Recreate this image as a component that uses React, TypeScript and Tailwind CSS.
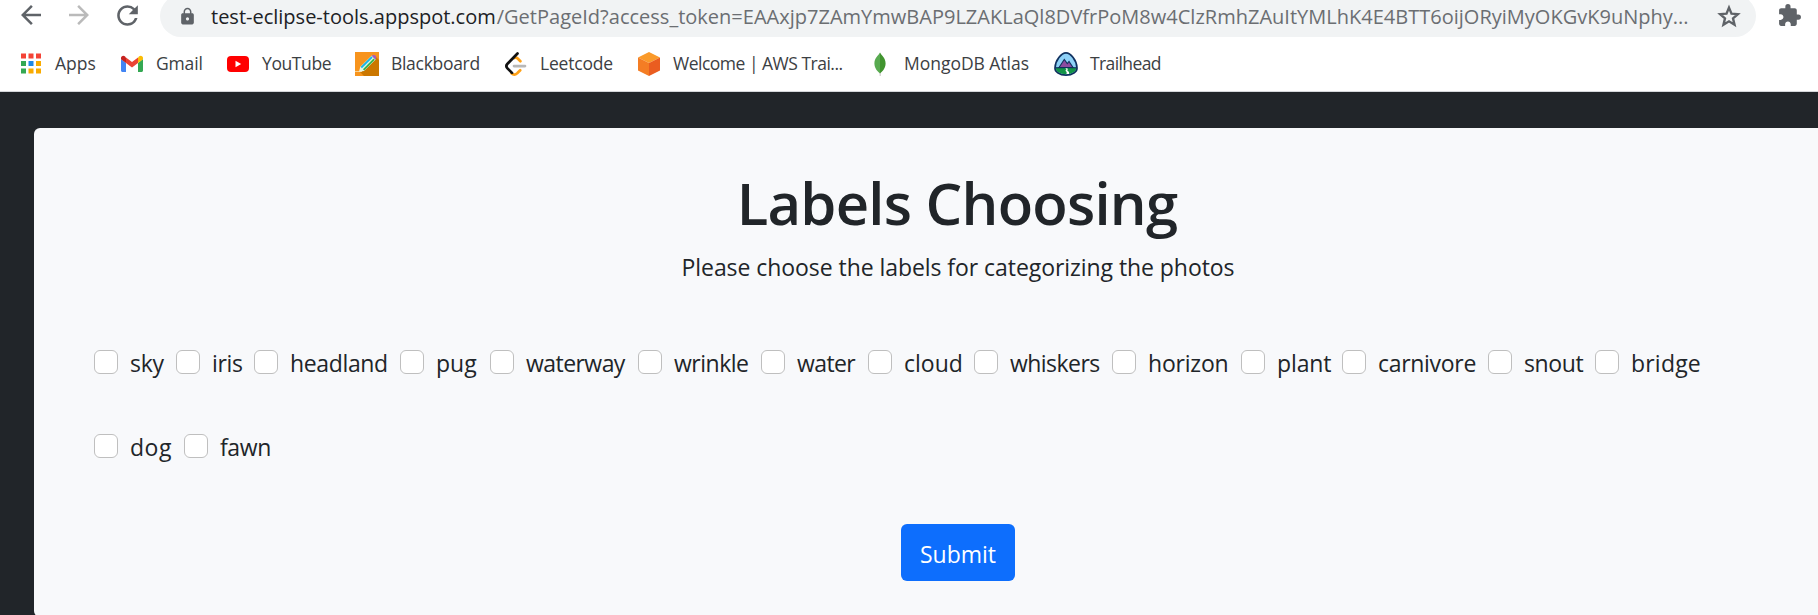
import type { ReactNode } from 'react';
import { MdArrowBack, MdArrowForward, MdExtension, MdLock, MdRefresh } from 'react-icons/md';

const StarIcon = () => (
  <svg viewBox="0 0 24 24" className="ml-auto size-[26px] shrink-0" fill="none" stroke="currentColor" strokeWidth="2.200">
    <path d="M12 4.300l2.300 5.500 5.900.5-4.500 3.900 1.400 5.800-5.100-3.100L6.900 20l1.400-5.800-4.500-3.900 5.900-.5z" />
  </svg>
);

const AppsIcon = () => (
  <svg viewBox="0 0 24 24" className="size-6">
    {['#f44336', '#f44336', '#f44336', '#34a853', '#1e88e5', '#f9ab00', '#34a853', '#f9ab00', '#f9ab00'].map((fill, i) => (
      <rect key={i} x={2 + (i % 3) * 7.5} y={1.5 + Math.floor(i / 3) * 7.5} width="5" height="5" fill={fill} />
    ))}
  </svg>
);

const GmailIcon = () => (
  <svg viewBox="0 0 24 24" className="size-6">
    <path d="M1 7v11.5C1 19.3 1.7 20 2.5 20H6v-9z" fill="#4285f4" />
    <path d="M18 11v9h3.500c.8 0 1.500-.7 1.500-1.500V7z" fill="#34a853" />
    <path d="M18 5.500V11l5-3.700V6c0-2-2.200-3-3.800-1.800z" fill="#fbbc04" />
    <path d="M6 11V5.500l6 4.500 6-4.500V11l-6 4.500z" fill="#ea4335" />
    <path d="M1 6v1.300L6 11V5.500L4.800 4.200C3.200 3 1 4 1 6z" fill="#c5221f" />
  </svg>
);

const YouTubeIcon = () => (
  <svg viewBox="0 0 24 24" className="size-6">
    <rect x="1" y="4" width="22" height="16" rx="4" fill="#f00" />
    <path d="M9.500 8.800v6.400l5.700-3.200z" fill="#fff" />
  </svg>
);

const BlackboardIcon = () => (
  <svg viewBox="0 0 24 24" className="size-6">
    <rect width="24" height="24" fill="#f7941d" />
    <path d="M21 5l3 3v16H9l-4-4z" fill="#cb7700" />
    <path d="M0 19.500h7" stroke="#fbd08e" strokeWidth="1" />
    <path d="M4 19.800l1.300-5L16.800 3.500l3.900 3.900L9 19z" fill="#e6f5e4" />
    <path d="M6.300 15.500L17 5" stroke="#19b5e8" strokeWidth="1.800" />
    <path d="M8.600 17.800L19.200 7.200" stroke="#35b34a" strokeWidth="1.800" />
    <path d="M16.600 3.800l1.700-.8c1.800-.4 3.400 1.200 3 3l-.9 1.600z" fill="#a75cbb" />
  </svg>
);

const LeetcodeIcon = () => (
  <svg viewBox="0 0 24 24" className="size-6" fill="none" strokeLinecap="round" strokeWidth="2.700">
    <path d="M10.500 6c1.200-.8 2.200-.4 3.200.5l2.700 2.700M7.500 21.300c1.800 1.600 4 1.500 5.700 0l3-3" stroke="#ffa116" />
    <path d="M10 14.100h11" stroke="#b8b8b8" />
    <path d="M13.500 1.500L3.500 11.700c-1.300 1.300-1.300 3.300 0 4.700l4.500 4.500" stroke="#111" />
  </svg>
);

const AwsIcon = () => (
  <svg viewBox="0 0 24 24" className="size-6">
    <path d="M12 0l11 5.500L12 11 1 5.500z" fill="#fa9a2a" />
    <path d="M1 5.500L12 11v13L1 18.500z" fill="#f47d24" />
    <path d="M23 5.500L12 11v13l11-5.500z" fill="#ea5d20" />
  </svg>
);

const MongoIcon = () => (
  <svg viewBox="0 0 24 24" className="size-6">
    <path d="M11.600 20h.9l.2 4h-1z" fill="#c2bfbf" />
    <path d="M12 .5c-1.500 3-5.600 5-5.600 11 0 5.200 3.900 8.500 5.600 10z" fill="#58aa50" />
    <path d="M12 .5c1.500 3 5.600 5 5.600 11 0 5.200-3.900 8.500-5.600 10z" fill="#41942f" />
  </svg>
);

const TrailheadIcon = () => (
  <svg viewBox="0 0 24 24" className="size-6">
    <path d="M12 .9C7.500.900 1.200 8.400 1 16c-.1 2 .7 3.500 2.700 4.700 2.200 1.500 5 2.400 8.300 2.400s6.100-.9 8.300-2.400c2-1.200 2.800-2.700 2.700-4.700C22.800 8.400 16.500.9 12 .9z" fill="#8ed1f7" stroke="#10315f" strokeWidth="1.700" />
    <path d="M1.900 16h20.200c0 1.800-.6 2.900-2.300 4-4.600 3-11 3-15.600 0-1.700-1.100-2.300-2.200-2.300-4z" fill="#129447" />
    <path d="M5 15.500l5.300-8 3 4 1.700-2 4 6z" fill="#8d4ba0" stroke="#10315f" strokeWidth="1.100" />
    <path d="M1.500 15.700h21" stroke="#10315f" strokeWidth="1.100" />
    <path d="M11 16.300c3.500 1.200-1 2 1.200 3.300.8.500.4 1.700.3 2.500h2.600c.3-2.400-.7-2.600-1.500-3.300s1.200-1.500-.6-2.500z" fill="#fff" />
  </svg>
);

const bookmarks: { text: string; icon: ReactNode; className: string }[] = [
  { text: 'Apps', icon: <AppsIcon />, className: 'w-[101px]' },
  { text: 'Gmail', icon: <GmailIcon />, className: 'w-[106px] tracking-[-0.15px]' },
  { text: 'YouTube', icon: <YouTubeIcon />, className: 'w-[129px] tracking-[-0.4px]' },
  { text: 'Blackboard', icon: <BlackboardIcon />, className: 'w-[149px] tracking-[-0.3px]' },
  { text: 'Leetcode', icon: <LeetcodeIcon />, className: 'w-[133px] tracking-[-0.2px]' },
  { text: 'Welcome | AWS Trai...', icon: <AwsIcon />, className: 'w-[231px] tracking-[-0.5px]' },
  { text: 'MongoDB Atlas', icon: <MongoIcon />, className: 'w-[186px] tracking-[-0.03px]' },
  { text: 'Trailhead', icon: <TrailheadIcon />, className: 'w-[130px] tracking-[-0.6px]' },
];

const labels = [
  { text: 'sky', className: 'w-[82px] tracking-[-0.3px]' },
  { text: 'iris', className: 'w-[78px] tracking-[-0.3px]' },
  { text: 'headland', className: 'w-[146px] tracking-[-0.35px]' },
  { text: 'pug', className: 'w-[90px]' },
  { text: 'waterway', className: 'w-[148px] tracking-[-0.55px]' },
  { text: 'wrinkle', className: 'w-[123px] tracking-[-0.5px]' },
  { text: 'water', className: 'w-[107px] tracking-[-0.6px]' },
  { text: 'cloud', className: 'w-[106px]' },
  { text: 'whiskers', className: 'w-[138px] tracking-[-0.55px]' },
  { text: 'horizon', className: 'w-[129px] tracking-[-0.2px]' },
  { text: 'plant', className: 'w-[101px] tracking-[-0.1px]' },
  { text: 'carnivore', className: 'w-[146px] tracking-[-0.3px]' },
  { text: 'snout', className: 'w-[107px] tracking-[-0.35px]' },
  { text: 'bridge', className: 'w-[106px] tracking-[0.2px]' },
  { text: 'dog', className: 'w-[90px] tracking-[0.5px]' },
  { text: 'fawn', className: 'w-[87px] tracking-[-0.4px]' },
];

function Toolbar() {
  return (
    <div className="flex h-[37px] items-start text-[#5f6368]">
      <div className="flex w-[160px] shrink-0 pl-[16px]">
        <MdArrowBack className="mr-[18px] size-[30px]" />
        <MdArrowForward className="mr-[18px] size-[30px] text-[#bababa]" />
        <MdRefresh className="size-[31px]" />
      </div>
      <div className="-mt-[5px] flex h-[42px] w-[1596px] shrink-0 items-center rounded-full bg-[#f1f3f4] pr-[14px] pl-[18px] text-[20px] whitespace-nowrap">
        <MdLock className="mr-[14px] size-[19px]" />
        <span className="pt-0.5 text-[#202124]">test-eclipse-tools.appspot.com</span>
        <span className="pt-0.5 pl-px tracking-[0.01px] text-[#6b6e72]">/GetPageId?access_token=EAAxjp7ZAmYmwBAP9LZAKLaQl8DVfrPoM8w4ClzRmhZAuItYMLhK4E4BTT6oijORyiMyOKGvK9uNphy...</span>
        <StarIcon />
      </div>
      <MdExtension className="mt-[3px] ml-[21px] size-[25px] shrink-0" />
    </div>
  );
}

export default function App() {
  return (
    <div className="flex h-[615px] w-[1818px] flex-col overflow-hidden bg-[#212529] font-['Open_Sans','Noto_Sans',sans-serif]">
      <header className="h-[92px] shrink-0 border-b border-[#d5d7da] bg-white">
        <Toolbar />
        <nav className="flex h-[54px] items-center pl-[19px] text-[17.5px] text-[#3c4043]">
          {bookmarks.map((b) => (
            <a key={b.text} className={`flex shrink-0 items-center gap-3 whitespace-nowrap ${b.className}`}>
              {b.icon}
              <span className="pb-[2px]">{b.text}</span>
            </a>
          ))}
        </nav>
      </header>
      <main className="mt-9 ml-[34px] flex h-[489px] w-[1848px] shrink-0 flex-col items-center rounded-md bg-[#f8f9fb] text-[#212529]">
        <h1 className="mt-[39px] pr-[2px] text-[58px] leading-[72px] font-semibold tracking-[-0.75px]">Labels Choosing</h1>
        <p className="mt-[10px] text-[23px] leading-9 tracking-[-0.06px]">Please choose the labels for categorizing the photos</p>
        <form className="flex w-full flex-col items-center">
          <div className="mt-[60px] flex w-full flex-wrap gap-y-12 pr-[120px] pl-[60px]">
            {labels.map((l) => (
              <label key={l.text} className={`flex h-9 shrink-0 items-start whitespace-nowrap ${l.className}`}>
                <input type="checkbox" className="mt-[5px] mr-3 size-6 shrink-0 appearance-none rounded-md border border-[#bfbfbf] bg-white" />
                <span className="text-[23px] leading-9">{l.text}</span>
              </label>
            ))}
          </div>
          <button type="button" className="mt-[59px] mr-px h-[57px] w-[114px] rounded-md bg-[#0d6efd] pt-[3px] pl-px text-[23px] text-white">
            Submit
          </button>
        </form>
      </main>
    </div>
  );
}
